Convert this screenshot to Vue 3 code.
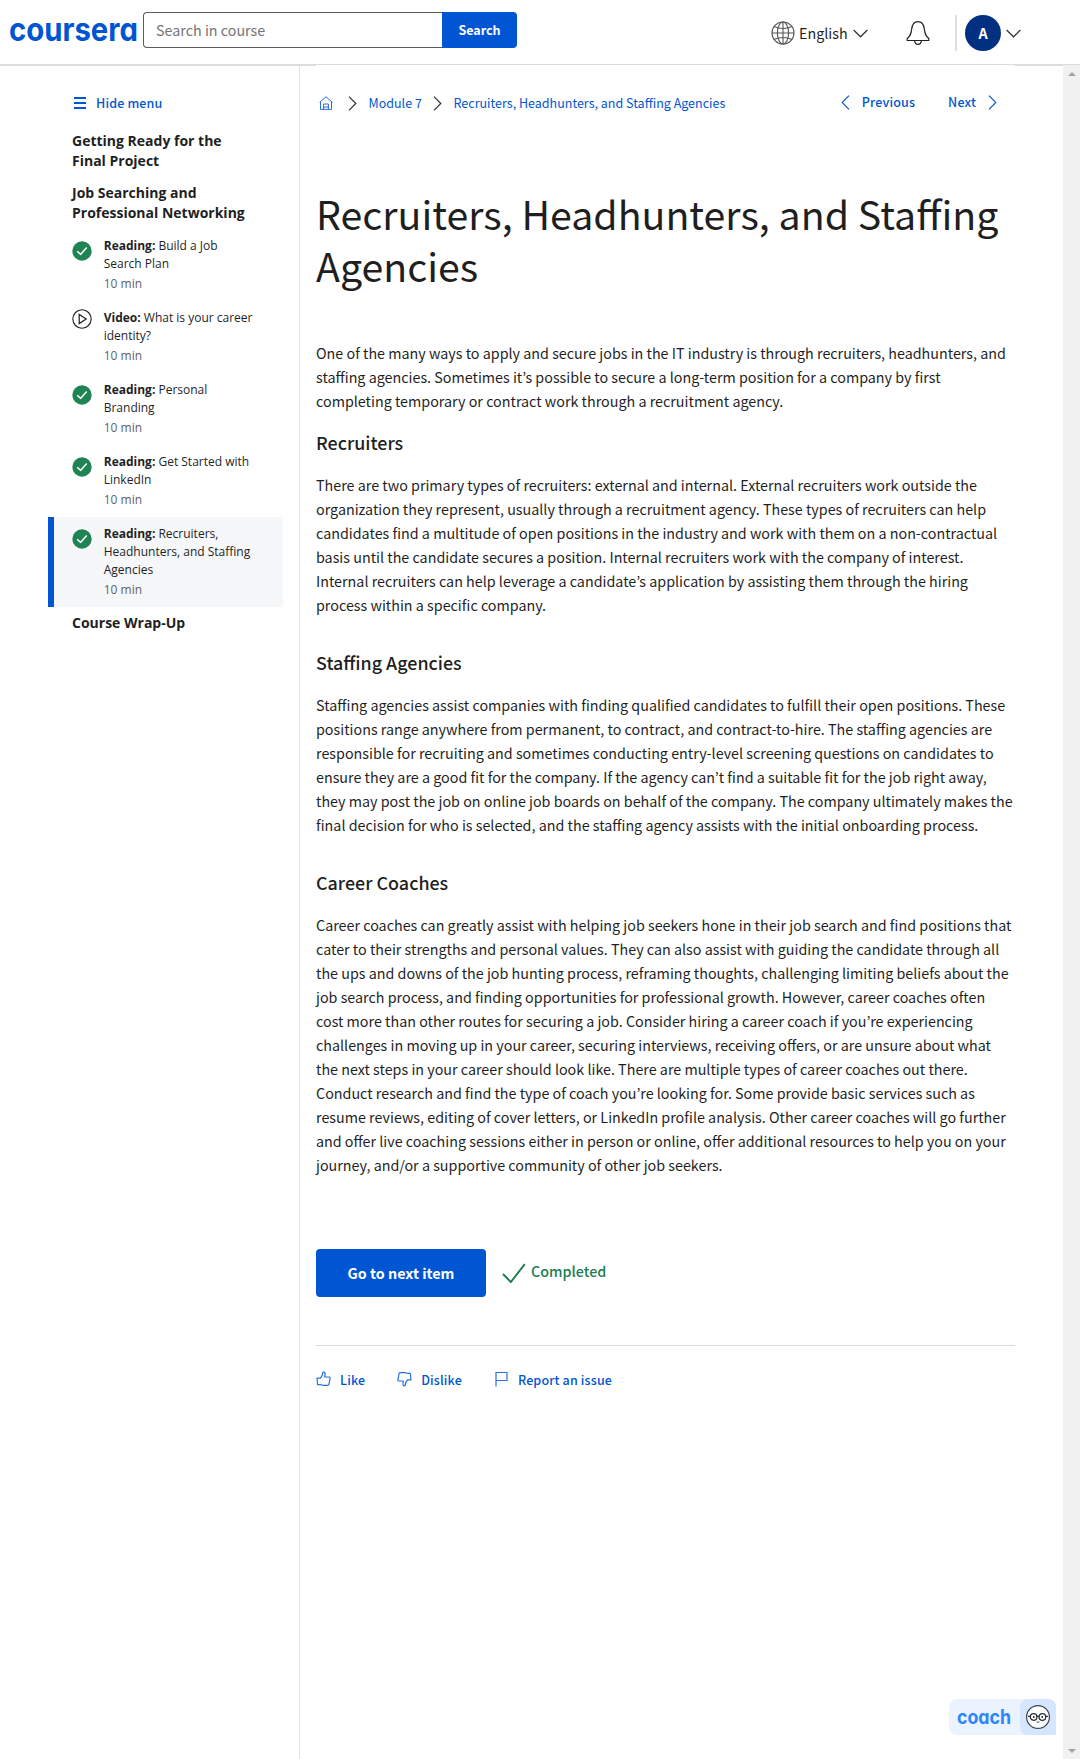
<script setup>
const lessons = [
  { kind: 'Reading:', title: ' Build a Job\nSearch Plan', done: true },
  { kind: 'Video:', title: ' What is your career\nidentity?', done: false },
  { kind: 'Reading:', title: ' Personal\nBranding', done: true },
  { kind: 'Reading:', title: ' Get Started with\nLinkedIn', done: true },
  { kind: 'Reading:', title: ' Recruiters,\nHeadhunters, and Staffing\nAgencies', done: true, active: true },
]

const intro = `One of the many ways to apply and secure jobs in the IT industry is through recruiters, headhunters, and
staffing agencies. Sometimes it’s possible to secure a long-term position for a company by first
completing temporary or contract work through a recruitment agency.`

const sections = [
  {
    title: 'Recruiters',
    body: `There are two primary types of recruiters: external and internal. External recruiters work outside the
organization they represent, usually through a recruitment agency. These types of recruiters can help
candidates find a multitude of open positions in the industry and work with them on a non-contractual
basis until the candidate secures a position. Internal recruiters work with the company of interest.
Internal recruiters can help leverage a candidate’s application by assisting them through the hiring
process within a specific company.`,
  },
  {
    title: 'Staffing Agencies',
    body: `Staffing agencies assist companies with finding qualified candidates to fulfill their open positions. These
positions range anywhere from permanent, to contract, and contract-to-hire. The staffing agencies are
responsible for recruiting and sometimes conducting entry-level screening questions on candidates to
ensure they are a good fit for the company. If the agency can’t find a suitable fit for the job right away,
they may post the job on online job boards on behalf of the company. The company ultimately makes the
final decision for who is selected, and the staffing agency assists with the initial onboarding process.`,
  },
  {
    title: 'Career Coaches',
    body: `Career coaches can greatly assist with helping job seekers hone in their job search and find positions that
cater to their strengths and personal values. They can also assist with guiding the candidate through all
the ups and downs of the job hunting process, reframing thoughts, challenging limiting beliefs about the
job search process, and finding opportunities for professional growth. However, career coaches often
cost more than other routes for securing a job. Consider hiring a career coach if you’re experiencing
challenges in moving up in your career, securing interviews, receiving offers, or are unsure about what
the next steps in your career should look like. There are multiple types of career coaches out there.
Conduct research and find the type of coach you’re looking for. Some provide basic services such as
resume reviews, editing of cover letters, or LinkedIn profile analysis. Other career coaches will go further
and offer live coaching sessions either in person or online, offer additional resources to help you on your
journey, and/or a supportive community of other job seekers.`,
  },
]
</script>

<template>
  <div class="page">
    <header class="topbar">
      <svg class="logo" width="130" height="36" viewBox="0 0 130 36">
        <text x="0" y="26.700" textLength="129" lengthAdjust="spacingAndGlyphs">coursera</text>
      </svg>
      <div class="search">
        <div class="search-input">Search in course</div>
        <div class="search-btn">Search</div>
      </div>
      <div class="tools">
        <svg class="globe" width="24" height="24" viewBox="0 0 24 24" fill="none" stroke="#555" stroke-width="1.1">
          <circle cx="12" cy="12" r="11" />
          <ellipse cx="12" cy="12" rx="5.6" ry="11" />
          <path d="M12 1v22M1 12h22M3.2 5.6c5 2.6 12.600 2.600 17.600 0M3.200 18.400c5-2.600 12.600-2.600 17.600 0" />
        </svg>
        <span class="lang">English</span>
        <svg class="chev" width="15" height="9" viewBox="0 0 15 9" fill="none" stroke="#333" stroke-width="1.2"><path d="M.6 1 7.500 7.800 14.400 1" /></svg>
        <svg class="bell" width="24" height="26" viewBox="0 0 24 26" fill="none" stroke="#222" stroke-width="1.200">
          <path d="M1.200 20.500v-2C4.500 15.800 5 14 5.600 9.500 6.200 4.400 8 1.700 12 1.700s5.800 2.700 6.400 7.800c.6 4.500 1.100 6.300 4.400 9v2z" />
          <path d="M8.600 20.600c.3 2.400 1.600 3.700 3.400 3.700s3.100-1.300 3.400-3.700" />
        </svg>
        <span class="divider"></span>
        <span class="avatar">A</span>
        <svg class="chev2" width="15" height="9" viewBox="0 0 15 9" fill="none" stroke="#333" stroke-width="1.200"><path d="M.6 1 7.500 7.800 14.400 1" /></svg>
      </div>
    </header>

    <div class="body">
      <aside class="sidebar">
        <div class="hide-menu">
          <span class="burger"><i></i><i></i><i></i></span>
          <span>Hide menu</span>
        </div>
        <h4>Getting Ready for the<br />Final Project</h4>
        <h4 class="gap">Job Searching and<br />Professional Networking</h4>
        <ul>
          <li v-for="(l, i) in lessons" :key="i" :class="{ active: l.active }">
            <svg v-if="l.done" width="20" height="20" viewBox="0 0 20 20" fill="none">
              <circle cx="10" cy="10" r="9.700" fill="#1f8354" />
              <path d="M5.200 10.200 8.600 13.400 14.700 6.400" stroke="#fff" stroke-width="1.500" />
            </svg>
            <svg v-else class="play" width="20" height="20" viewBox="0 0 20 20" fill="none" stroke="#1f1f1f" stroke-width="1.100">
              <circle cx="10" cy="10" r="9.200" />
              <path d="M7.200 5.400v9.200l7-4.600z" stroke-width="1.200" />
            </svg>
            <div class="lesson">
              <p><b>{{ l.kind }}</b>{{ l.title }}</p>
              <span>10 min</span>
            </div>
          </li>
        </ul>
        <h4 class="last">Course Wrap-Up</h4>
      </aside>

      <main class="content">
        <nav class="crumbs">
          <svg class="home" width="14" height="14" viewBox="0 0 14 14" fill="none" stroke="#2a6fdb">
            <path d="M.6 6.300 7 .8l6.400 5.500M1.500 5.600v7.800h11V5.600M4.600 13.400V8h4.800v5.400M4.600 11h4.800" />
          </svg>
          <svg class="c1" width="9" height="15" viewBox="0 0 9 15" fill="none" stroke="#333" stroke-width="1.200"><path d="M1 .7 7.800 7.500 1 14.300" /></svg>
          <span class="module">Module 7</span>
          <svg class="c2" width="9" height="15" viewBox="0 0 9 15" fill="none" stroke="#333" stroke-width="1.200"><path d="M1 .7 7.800 7.500 1 14.300" /></svg>
          <span>Recruiters, Headhunters, and Staffing Agencies</span>
          <div class="pager">
            <svg width="9" height="15" viewBox="0 0 9 15" fill="none" stroke="#0056d2" stroke-width="1.100"><path d="M8 .7 1.200 7.500 8 14.300" /></svg>
            <span class="prev">Previous</span>
            <span class="next">Next</span>
            <svg width="9" height="15" viewBox="0 0 9 15" fill="none" stroke="#0056d2" stroke-width="1.100"><path d="M1 .7 7.800 7.500 1 14.300" /></svg>
          </div>
        </nav>

        <h1>Recruiters, Headhunters, and Staffing<br />Agencies</h1>
        <p class="text">{{ intro }}</p>
        <section v-for="s in sections" :key="s.title">
          <h3>{{ s.title }}</h3>
          <p class="text">{{ s.body }}</p>
        </section>

        <div class="actions">
          <div class="next-btn">Go to next item</div>
          <svg width="24" height="21" viewBox="0 0 24 21" fill="none" stroke="#1d7c50" stroke-width="1.900"><path d="M1 11 8.800 19 22.800 1.200" /></svg>
          <span>Completed</span>
        </div>

        <footer class="feedback">
          <svg width="15" height="16" viewBox="0 0 15 16" fill="none" stroke="#2a6fdb" stroke-width="1.200" stroke-linejoin="round">
            <path d="M1 7.200h3.400C6 5.800 6.600 4.200 7 1.200c1.600-.4 2.300.8 2 2.600L8.600 6h4.800c.6 0 .8.4.7.9l-1.200 6.600c-.1.600-.5.900-1.100.9H7.200c-1 0-1.800-.8-2.800-.8H1.600L1 7.200z" />
          </svg>
          <span class="like">Like</span>
          <svg width="15" height="16" viewBox="0 0 15 16" fill="none" stroke="#2a6fdb" stroke-width="1.200" stroke-linejoin="round">
            <path d="M14 8.800h-3.400C9 10.200 8.400 11.800 8 14.800c-1.600.4-2.300-.8-2-2.600L6.400 10H1.600c-.6 0-.8-.4-.7-.9l1.200-6.600c.1-.6.5-.9 1.100-.9h4.600c1 0 1.800.8 2.800.8h2.800L14 8.800z" />
          </svg>
          <span class="dislike">Dislike</span>
          <svg width="13" height="16" viewBox="0 0 13 16" fill="none" stroke="#2a6fdb" stroke-width="1.200"><path d="M1 15.500V1.500h11v8H1" /></svg>
          <span class="report">Report an issue</span>
        </footer>
      </main>

      <div class="scrollbar"><i class="up"></i><i class="down"></i></div>
    </div>

    <div class="coach">
      <svg width="71" height="36" viewBox="0 0 71 36">
        <text x="8" y="24.500" textLength="54" lengthAdjust="spacingAndGlyphs">coach</text>
      </svg>
      <div class="face">
        <svg width="24" height="24" viewBox="0 0 24 24" fill="none" stroke="#2b2f36">
          <circle cx="12" cy="12" r="11.400" fill="#fff" stroke="#3b4252" stroke-width="1.200" />
          <circle cx="7.600" cy="12" r="3.300" stroke-width="1.300" />
          <circle cx="16.400" cy="12" r="3.300" stroke-width="1.300" />
          <path d="M10.900 11.400q1.100-.7 2.200 0M2 11.300h2.300M19.700 11.300H22" stroke-width="1.200" />
          <path d="M10.600 16.800q1.400 1 2.800 0" stroke-width=".9" />
          <circle cx="7.800" cy="12" r=".9" fill="#222" stroke="none" />
          <circle cx="16.200" cy="12" r=".9" fill="#222" stroke="none" />
        </svg>
      </div>
    </div>
  </div>
</template>

<style>
body { background: #fff; }
</style>

<style scoped>
* { box-sizing: border-box; margin: 0; padding: 0; }
svg { display: block; flex: none; }
.page {
  position: relative;
  width: 1080px;
  height: 1759px;
  display: flex;
  flex-direction: column;
  overflow: hidden;
  color: #1f1f1f;
  font-family: "Noto Sans CJK KR", "Noto Sans", sans-serif;
  font-size: 14.320px;
  white-space: nowrap;
}
.topbar {
  height: 65px;
  flex: none;
  display: flex;
  align-items: flex-start;
  border-bottom: 1px solid #dcdcdc;
}
.logo { margin: 14px 0 0 9px; overflow: visible; }
.logo text, .coach text { font-family: Inter, sans-serif; font-weight: 700; font-feature-settings: "cv11"; }
.logo text { font-size: 32px; fill: #0056d2; }
.search { display: flex; width: 374px; height: 36px; margin: 12px 0 0 4px; }
.search-input {
  width: 299px;
  border: 1px solid #5b5b5b;
  border-right: 0;
  border-radius: 4px 0 0 4px;
  padding-left: 12px;
  line-height: 34px;
  color: #757575;
}
.search-btn {
  flex: 1;
  background: #0056d2;
  border-radius: 0 4px 4px 0;
  color: #fff;
  text-align: center;
  font-size: 12.530px;
  font-weight: 700;
  line-height: 35px;
}
.tools { display: flex; align-items: center; height: 36px; margin: 15px 0 0 254px; }
.lang { margin-left: 4px; width: 49px; line-height: 36px; }
.chev { margin-left: 5px; }
.bell { margin-left: 38px; }
.divider { width: 2px; height: 36px; background: #dedede; margin-left: 25px; }
.avatar {
  width: 36px; height: 36px; margin-left: 8px;
  border-radius: 50%;
  background: #00307f;
  color: #fff;
  text-align: center;
  font-weight: 700;
  line-height: 36px;
}
.chev2 { margin-left: 5px; }

.body {
  flex: 1; display: flex;
  background:
    linear-gradient(#dcdcdc, #dcdcdc) 0 0 / 316px 1px no-repeat,
    linear-gradient(#dcdcdc, #dcdcdc) 100% 0 / 65px 1px no-repeat;
}
.sidebar {
  width: 300px;
  border-right: 1px solid #e1e1e1;
  padding: 28px 0 0 48px;
  font-family: "Open Sans", sans-serif;
}
.hide-menu {
  display: flex; align-items: center;
  height: 20px; margin-left: 26px;
  color: #0056d2;
  font: 500 12.530px/20px "Noto Sans CJK KR", sans-serif;
  letter-spacing: .150px;
}
.burger { width: 12px; height: 12px; margin-right: 10px; display: flex; flex-direction: column; justify-content: space-between; }
.burger i { height: 2px; background: #0056d2; }
h4 { margin: 18px 0 0 24px; font-size: 14px; line-height: 20px; font-weight: 700; }
h4.gap { margin-top: 12px; }
h4.last { margin-top: 6px; }
ul { list-style: none; margin-top: 6px; width: 235px; }
li { display: flex; padding: 8px 0 8px 24px; }
li svg { margin: 4px 12px 0 -.3px; }
li svg.play { margin-top: 0; }
li.active { background: #f5f7f8; border-left: 6px solid #0056d2; padding-left: 18px; }
.lesson { font-size: 12px; line-height: 18px; }
.lesson p { white-space: pre-line; }
.lesson span { display: block; margin-top: 2px; color: #636363; }

.content { width: 716px; padding: 0 0 0 16px; }
.crumbs {
  display: flex; align-items: center;
  width: 699px; height: 20px; margin-top: 28px;
  font-size: 12.530px; line-height: 20px;
  color: #0056d2;
}
.home { margin-left: 3px; }
.c1 { margin-left: 14.500px; }
.module { margin-left: 12px; width: 53px; }
.c2 { margin-left: 11px; margin-right: 12px; }
.pager { margin-left: auto; margin-right: 18px; display: flex; align-items: center; font-weight: 500; letter-spacing: .150px; position: relative; top: -1px; }
.prev { margin: 0 33px 0 12px; }
.next { margin-right: 12px; }
h1 { margin-top: 74px; font-size: 39.300px; line-height: 52px; font-weight: 400; }
.text { line-height: 24px; white-space: pre-line; width: 720px; }
h1 + .text { margin-top: 50px; }
h3 { font-size: 17.900px; line-height: 26px; font-weight: 500; padding-top: 16px; height: 60px; }
section + section h3 { padding-top: 32px; height: 76px; }

.actions { display: flex; align-items: flex-start; margin-top: 72px; }
.next-btn {
  width: 170px; height: 48px;
  background: #0056d2; color: #fff;
  border-radius: 4px;
  text-align: center; font-weight: 700; line-height: 47px;
}
.actions svg { margin: 14px 0 0 16px; }
.actions span { margin: 11px 0 0 5px; color: #1d7c50; font-weight: 500; line-height: 22px; }
.feedback {
  width: 699px; margin-top: 48px; height: 67px;
  border-top: 1px solid #dadada;
  display: flex; align-items: center;
  color: #0056d2; font-size: 12.530px; font-weight: 500; letter-spacing: .150px;
}
.like { margin: 0 32px 0 9px; }
.dislike { margin: 0 33px 0 9px; }
.report { margin-left: 10px; }

.scrollbar {
  width: 17px; margin-left: auto;
  background: #f1f1f1;
  display: flex; flex-direction: column; justify-content: space-between; align-items: center;
  padding: 7px 0 6px;
}
.scrollbar i { border: 4px solid transparent; }
.up { border-top: 0 !important; border-bottom-color: #a3a3a3 !important; }
.down { border-bottom: 0 !important; border-top-color: #a3a3a3 !important; }

.coach {
  position: absolute; right: 24px; bottom: 24px;
  width: 107px; height: 36px;
  display: flex;
  background: #ebf3ff;
  border-radius: 8px 8px 2px 8px;
}
.coach text { font-size: 19.500px; fill: #2d86f9; }
.face {
  width: 36px; height: 36px;
  background: #d6e6ff;
  border-radius: 8px 8px 2px 8px;
  display: flex; align-items: center; justify-content: center;
}
</style>
